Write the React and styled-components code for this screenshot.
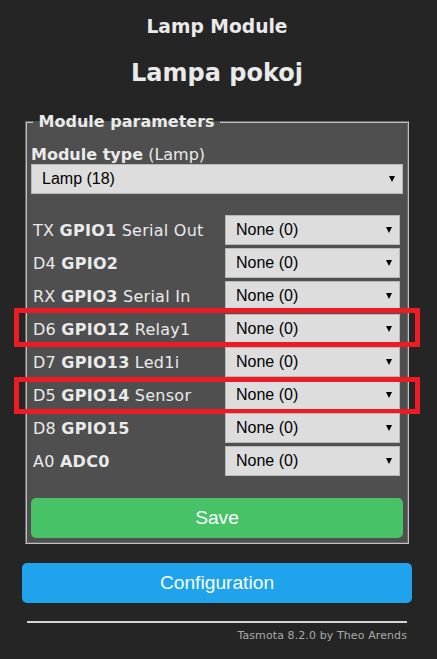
import React from 'react';
import styled, { createGlobalStyle } from 'styled-components';

const GlobalStyle = createGlobalStyle`
  html, body {
    margin: 0;
    padding: 0;
    background: #252525;
  }
  body {
    font-family: 'DejaVu Sans', Verdana, sans-serif;
    color: #eaeaea;
  }
`;

const Page = styled.div`
  width: 390px;
  margin-left: 22px;
  padding-top: 16px;
  padding-bottom: 16px;
`;

const Header = styled.div`
  text-align: center;
`;

const ModuleName = styled.h3`
  margin: 0;
  font-size: 18.7px;
  line-height: 22px;
  font-weight: bold;
`;

const DeviceName = styled.h2`
  margin: 21px 0 0;
  font-size: 24px;
  line-height: 28px;
  font-weight: bold;
`;

const Fieldset = styled.fieldset`
  margin: 25px 3px 0;
  padding: 0 4px 4px;
  min-width: 0;
  border: 2px groove #c0c0c0;
  background: #4f4f4f;
`;

const Legend = styled.legend`
  padding: 0;
  margin-left: 2px;
  font-size: 16px;
  line-height: 19px;
  font-weight: bold;
`;

const TypeLabel = styled.div`
  margin-top: 15px;
  font-size: 16px;
  line-height: 18px;
`;

const SelectBox = styled.div`
  box-sizing: border-box;
  display: flex;
  align-items: center;
  justify-content: space-between;
  width: ${(p) => (p.$wide ? '100%' : '175px')};
  height: 30px;
  padding: 0 7px 0 10px;
  background: #dddddd;
  border: 1px solid #b8b8b8;
  color: #000;
  font-family: 'Liberation Sans', Arial, sans-serif;
  font-size: 16px;
  flex-shrink: 0;
`;

const Arrow = styled.span`
  width: 0;
  height: 0;
  border-left: 3.5px solid transparent;
  border-right: 3.5px solid transparent;
  border-top: 6px solid #000;
`;

const GpioList = styled.div`
  margin-top: 21px;
  display: flex;
  flex-direction: column;
  gap: 3px;
  padding-left: 2px;
`;

const Row = styled.div`
  position: relative;
  display: flex;
  align-items: center;
  height: 30px;
`;

const Label = styled.div`
  width: 192px;
  padding-top: 1px;
  font-size: 16px;
  letter-spacing: 0.25px;
  white-space: nowrap;
`;

const Highlight = styled.div`
  position: absolute;
  left: -19px;
  right: -17px;
  top: ${(p) => p.$top}px;
  bottom: ${(p) => p.$bottom}px;
  border: 5px solid #ed1c24;
  pointer-events: none;
`;

const Button = styled.button`
  display: block;
  width: 100%;
  height: 40px;
  border: 0;
  border-radius: 5px;
  background: ${(p) => p.$color};
  color: #faffff;
  font-family: 'Liberation Sans', Arial, sans-serif;
  font-size: 19.2px;
  margin-top: ${(p) => p.$gap}px;
  cursor: pointer;
`;

const Rule = styled.hr`
  margin: 18px 5px 0;
  border: 0;
  border-top: 2px solid #d6d6d6;
`;

const Footer = styled.div`
  margin-top: 6px;
  padding-right: 5px;
  text-align: right;
  font-size: 11px;
  letter-spacing: 0.1px;
  color: #aaa;
`;

const Select = ({ value, wide }) => (
  <SelectBox $wide={wide}>
    <span>{value}</span>
    <Arrow />
  </SelectBox>
);

const gpios = [
  { pin: 'TX', name: 'GPIO1', fn: 'Serial Out' },
  { pin: 'D4', name: 'GPIO2', fn: '' },
  { pin: 'RX', name: 'GPIO3', fn: 'Serial In' },
  { pin: 'D6', name: 'GPIO12', fn: 'Relay1', mark: [-6, -3] },
  { pin: 'D7', name: 'GPIO13', fn: 'Led1i' },
  { pin: 'D5', name: 'GPIO14', fn: 'Sensor', mark: [-3, -4] },
  { pin: 'D8', name: 'GPIO15', fn: '' },
  { pin: 'A0', name: 'ADC0', fn: '' },
];

const App = () => (
  <Page>
    <GlobalStyle />
    <Header>
      <ModuleName>Lamp Module</ModuleName>
      <DeviceName>Lampa pokoj</DeviceName>
    </Header>
    <Fieldset>
      <Legend>&nbsp;Module parameters&nbsp;</Legend>
      <TypeLabel>
        <b>Module type</b> (Lamp)
      </TypeLabel>
      <Select value="Lamp (18)" wide />
      <GpioList>
        {gpios.map((g) => (
          <Row key={g.name}>
            <Label>
              {g.pin} <b>{g.name}</b>
              {g.fn ? ` ${g.fn}` : ''}
            </Label>
            <Select value="None (0)" />
            {g.mark && <Highlight $top={g.mark[0]} $bottom={g.mark[1]} />}
          </Row>
        ))}
      </GpioList>
      <Button $color="#47c266" $gap={22}>Save</Button>
    </Fieldset>
    <Button $color="#1fa3ec" $gap={19}>Configuration</Button>
    <Rule />
    <Footer>Tasmota 8.2.0 by Theo Arends</Footer>
  </Page>
);

export default App;
